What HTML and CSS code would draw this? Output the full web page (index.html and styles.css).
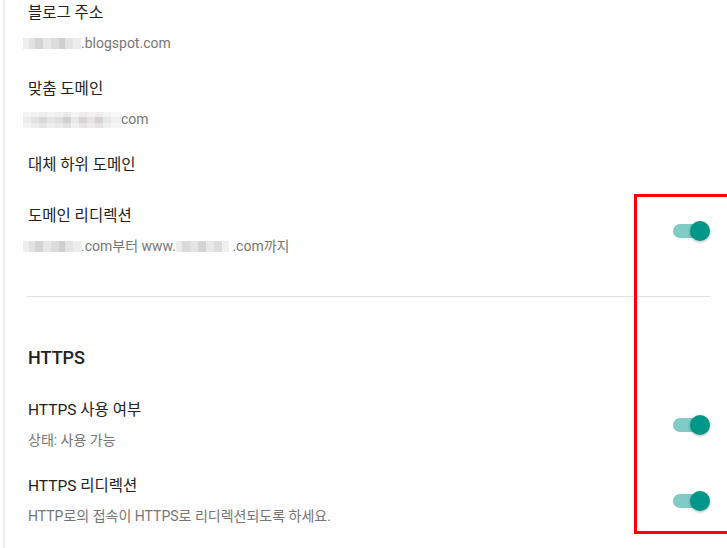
FILE: index.html
```html
<!DOCTYPE html>
<html lang="ko">
<head>
<meta charset="utf-8">
<title>설정</title>
<link rel="stylesheet" href="styles.css">
</head>
<body>
<div class="page">
  <div class="settings">
    <div class="row row-first">
      <div class="text">
        <div class="title">블로그 주소</div>
        <div class="sub"><span class="mosaic m1"></span>.blogspot.com</div>
      </div>
    </div>
    <div class="row">
      <div class="text">
        <div class="title">맞춤 도메인</div>
        <div class="sub"><span class="mosaic m2"></span>com</div>
      </div>
    </div>
    <div class="row">
      <div class="text">
        <div class="title">대체 하위 도메인</div>
      </div>
    </div>
    <div class="row row-redirect">
      <div class="text">
        <div class="title">도메인 리디렉션</div>
        <div class="sub"><span class="mosaic m1"></span>.com부터 www.<span class="mosaic m3"></span> .com까지</div>
      </div>
      <div class="switch"><span class="track"></span><span class="thumb"></span></div>
    </div>

    <hr class="divider">

    <h2 class="section-title">HTTPS</h2>

    <div class="row row-https">
      <div class="text">
        <div class="title">HTTPS 사용 여부</div>
        <div class="sub">상태: 사용 가능</div>
      </div>
      <div class="switch"><span class="track"></span><span class="thumb"></span></div>
    </div>
    <div class="row">
      <div class="text">
        <div class="title">HTTPS 리디렉션</div>
        <div class="sub">HTTP로의 접속이 HTTPS로 리디렉션되도록 하세요.</div>
      </div>
      <div class="switch"><span class="track"></span><span class="thumb"></span></div>
    </div>
  </div>
</div>
<div class="highlight"></div>
</body>
</html>
```

FILE: styles.css
```css
html, body {
  margin: 0;
  padding: 0;
  background: #ffffff;
}

body {
  font-family: Roboto, "Noto Sans CJK KR", "Noto Sans", sans-serif;
  color: #212121;
  width: 727px;
  height: 548px;
  overflow: hidden;
  position: relative;
}

.page {
  margin-left: 3px;
  border-left: 2px solid #eeeeee;
  padding-left: 22px;
  min-height: 548px;
  box-sizing: border-box;
}

.settings {
  width: 683px;
  display: flex;
  flex-direction: column;
}

.row {
  display: flex;
  align-items: center;
  justify-content: space-between;
  margin-top: 26px;
}

.row-first {
  margin-top: 3px;
}

.row-redirect {
  margin-top: 31px;
}

.row-https {
  margin-top: 32px;
}

.text {
  display: flex;
  flex-direction: column;
  gap: 10px;
  padding-left: 1px;
}

.title {
  font-size: 15.5px;
  line-height: 20px;
  color: #212121;
}

.sub {
  font-size: 14px;
  line-height: 20px;
  color: #757575;
  display: flex;
  align-items: center;
  white-space: pre;
}

.mosaic {
  display: inline-block;
  height: 11px;
  margin-top: 1px;
}

.m1 {
  width: 58px;
  margin-left: -5px;
  background:
    linear-gradient(90deg,
      #eeeeee 0 6px, #e2e2e2 6px 12px, #d6d3d3 12px 20px, #e6e6e6 20px 28px,
      #dcdcdc 28px 36px, #cfcfcf 36px 42px, #e4e4e4 42px 50px, #ececec 50px 58px);
}

.m2 {
  width: 98px;
  height: 16px;
  margin-left: -5px;
  background:
    linear-gradient(180deg, rgba(255,255,255,0.55) 0 5px, rgba(255,255,255,0) 5px 11px, rgba(255,255,255,0.35) 11px 16px),
    linear-gradient(90deg,
      #ececec 0 8px, #e2e2e2 8px 16px, #d9d6d6 16px 24px, #e6e4e4 24px 32px,
      #dedede 32px 40px, #d2cfcf 40px 48px, #e8e8e8 48px 56px, #d8d4d4 56px 64px,
      #e4e2e2 64px 72px, #d6d2d2 72px 80px, #e6e6e6 80px 88px, #f0f0f0 88px 98px);
}

.m3 {
  width: 53px;
  background:
    linear-gradient(90deg,
      #ececec 0 6px, #dadada 6px 14px, #e4e4e4 14px 22px, #d4d4d4 22px 30px,
      #e8e8e8 30px 38px, #dcdcdc 38px 46px, #f0f0f0 46px 53px);
}

.switch {
  position: relative;
  width: 37px;
  height: 20px;
  flex: none;
}

.track {
  position: absolute;
  left: 0;
  top: 3px;
  width: 34px;
  height: 14px;
  border-radius: 7px;
  background: #80cbc4;
}

.thumb {
  position: absolute;
  right: 0;
  top: 0;
  width: 20px;
  height: 20px;
  border-radius: 50%;
  background: #009688;
  box-shadow: 0 1px 3px rgba(0, 0, 0, 0.3);
}

.divider {
  margin: 40px 0 0 0;
  border: 0;
  border-top: 1px solid #e0e0e0;
  height: 0;
}

.section-title {
  margin: 51px 0 0 1px;
  font-size: 18px;
  line-height: 20px;
  font-weight: 500;
  color: #212121;
}

.highlight {
  position: absolute;
  left: 634px;
  top: 194px;
  width: 110px;
  height: 334px;
  border: 3px solid #ff0000;
}
```
